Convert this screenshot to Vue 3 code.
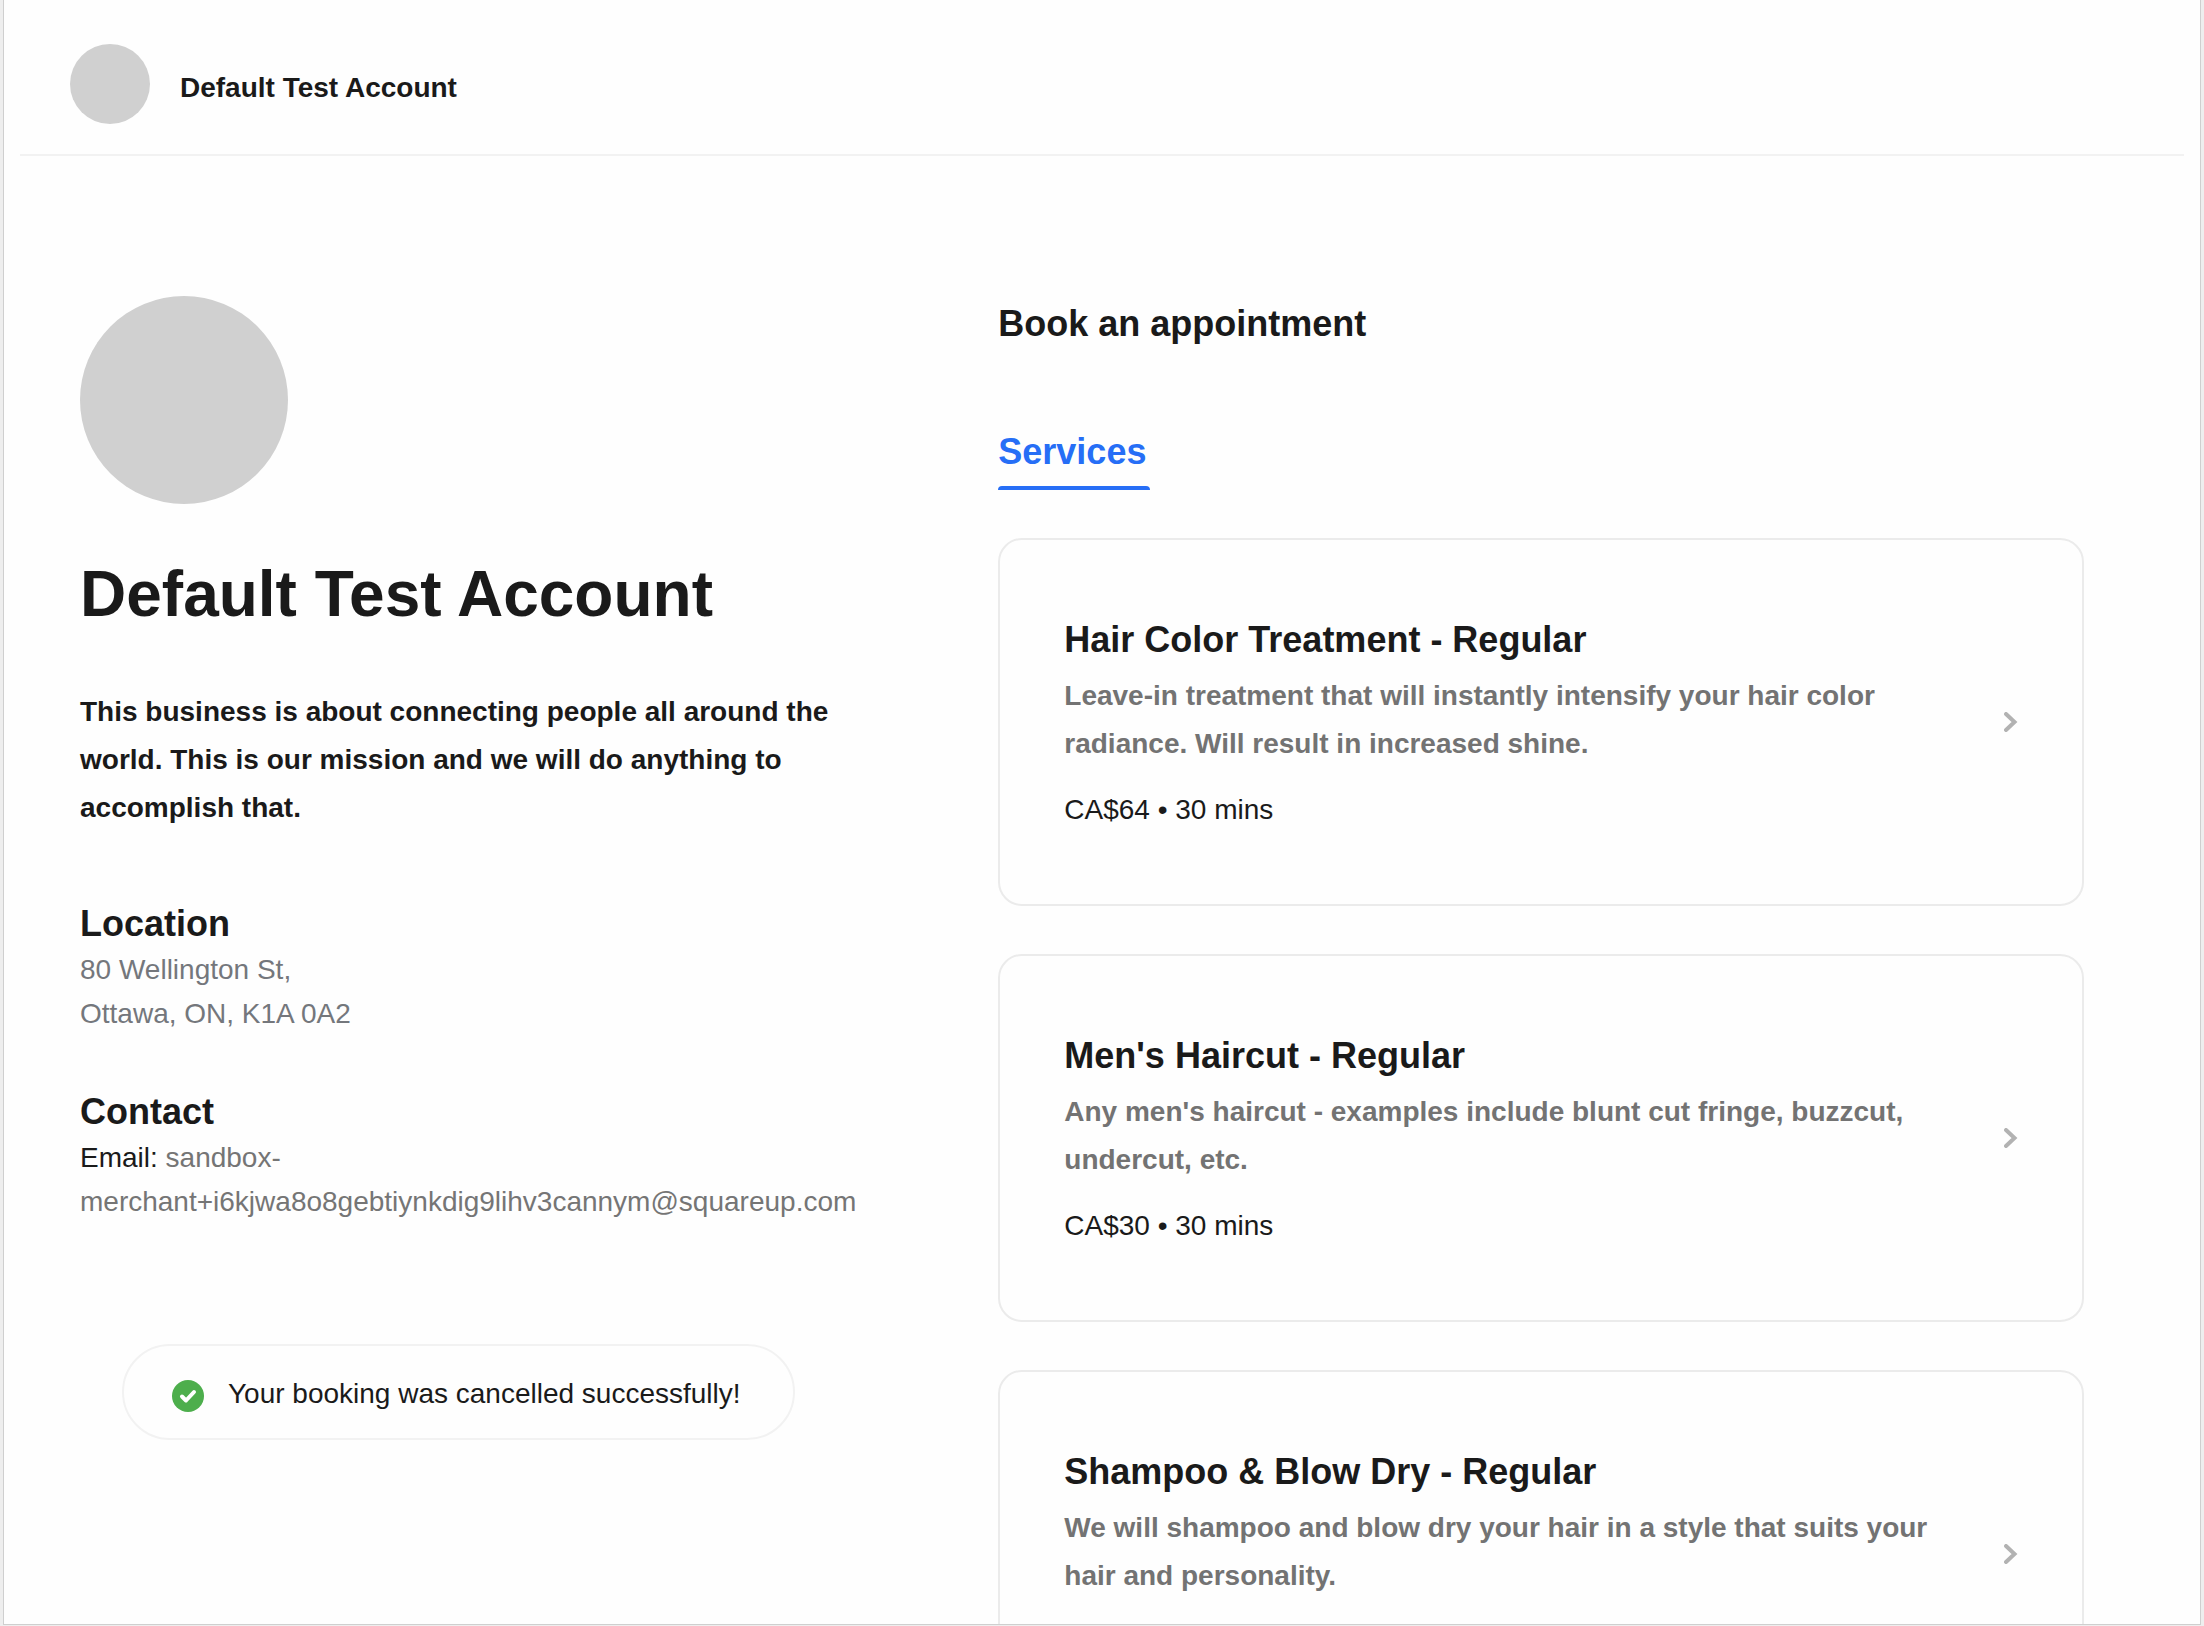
<script setup>
const business = {
  name: 'Default Test Account',
  about:
    'This business is about connecting people all around the world. This is our mission and we will do anything to accomplish that.',
  street: '80 Wellington St,',
  city: 'Ottawa, ON, K1A 0A2',
  email: 'sandbox-merchant+i6kjwa8o8gebtiynkdig9lihv3cannym@squareup.com',
}

const services = [
  {
    id: 'color',
    name: 'Hair Color Treatment - Regular',
    description:
      'Leave-in treatment that will instantly intensify your hair color radiance. Will result in increased shine.',
    price: 'CA$64 • 30 mins',
  },
  {
    id: 'haircut',
    name: "Men's Haircut - Regular",
    description:
      "Any men's haircut - examples include blunt cut fringe, buzzcut, undercut, etc.",
    price: 'CA$30 • 30 mins',
  },
  {
    id: 'shampoo',
    name: 'Shampoo & Blow Dry - Regular',
    description:
      'We will shampoo and blow dry your hair in a style that suits your hair and personality.',
    price: '',
  },
]
</script>

<template>
  <div class="backdrop">
    <div class="window">
      <header class="topbar">
        <span class="avatar avatar-small"></span>
        <span class="brand">{{ business.name }}</span>
      </header>

      <main class="columns">
        <aside class="profile">
          <span class="avatar avatar-large"></span>
          <h1>{{ business.name }}</h1>
          <p class="about">{{ business.about }}</p>

          <section class="info">
            <h2>Location</h2>
            <address>{{ business.street }}<br />{{ business.city }}</address>
          </section>

          <section class="info">
            <h2>Contact</h2>
            <p class="contact">
              Email: <a :href="'mailto:' + business.email">{{ business.email }}</a>
            </p>
          </section>

          <div class="toast" role="status">
            <svg class="check" viewBox="0 0 32 32" aria-hidden="true">
              <circle cx="16" cy="16" r="16" fill="#4dae4c" />
              <path
                d="M10 16.5 L14 20.5 L22 12"
                fill="none"
                stroke="#fff"
                stroke-width="4"
                stroke-linecap="round"
                stroke-linejoin="round"
              />
            </svg>
            <span>Your booking was cancelled successfully!</span>
          </div>
        </aside>

        <section class="booking">
          <h2>Book an appointment</h2>
          <nav class="tabs">
            <button type="button" class="tab">Services</button>
          </nav>
          <ul class="services">
            <li v-for="service in services" :key="service.id">
              <a class="card" :href="'#' + service.id">
                <div class="card-text">
                  <h3>{{ service.name }}</h3>
                  <p class="description">{{ service.description }}</p>
                  <p class="price">{{ service.price }}</p>
                </div>
                <svg class="chevron" viewBox="0 0 14 20" aria-hidden="true">
                  <path
                    d="M2 2 L10.5 10 L2 18"
                    fill="none"
                    stroke="#b2b2b2"
                    stroke-width="4"
                    stroke-linecap="round"
                    stroke-linejoin="miter"
                  />
                </svg>
              </a>
            </li>
          </ul>
        </section>
      </main>
    </div>
  </div>
</template>

<style>
body {
  margin: 0;
}
</style>

<style scoped>
.backdrop {
  box-sizing: border-box;
  height: 100vh;
  padding: 0 3px 1px;
  background: #eeeeee;
  color: #1a1a1a;
  font-family: "Liberation Sans", Arial, sans-serif;
  font-size: 28px;
  line-height: 44px;
}

.window {
  box-sizing: border-box;
  height: 100%;
  overflow: hidden;
  border: 1px solid #cfcfcf;
  border-top: 0;
  background: #fefefe;
}

h1,
h2,
h3,
p,
ul {
  margin: 0;
  padding: 0;
}

h2,
h3 {
  font-size: 36px;
  line-height: 48px;
}

a {
  color: inherit;
  text-decoration: none;
}

.avatar {
  display: block;
  flex: none;
  border-radius: 50%;
  background: #d0d0d0;
}

.avatar-small {
  width: 80px;
  height: 80px;
}

.avatar-large {
  width: 208px;
  height: 208px;
}

.topbar {
  display: flex;
  align-items: center;
  gap: 30px;
  margin: 0 16px;
  padding: 44px 50px 30px;
  border-bottom: 2px solid #f2f2f2;
}

.brand {
  padding-top: 8px;
  font-weight: 700;
}

.columns {
  display: grid;
  grid-template-columns: 25fr 34fr;
  gap: 120px;
  align-items: start;
  padding: 140px 116px 0 76px;
}

h1 {
  margin-top: 50px;
  font-size: 64px;
  line-height: 80px;
}

.about {
  margin-top: 54px;
  font-weight: 700;
  line-height: 48px;
}

.info {
  margin-top: 52px;
}

.about + .info {
  margin-top: 68px;
}

address {
  color: #74777c;
  font-style: normal;
}

.contact a {
  color: #757575;
}

.toast {
  display: flex;
  align-items: center;
  gap: 24px;
  box-sizing: border-box;
  width: fit-content;
  margin: 120px 0 0 42px;
  padding: 26px 52px 22px 48px;
  border: 2px solid #f2f2f2;
  border-radius: 48px;
}

.check {
  width: 32px;
  height: 32px;
  margin-top: 4px;
}

.booking {
  padding-top: 4px;
}

.tabs {
  display: flex;
  margin: 80px 0 48px;
}

.tab {
  padding: 0;
  border: 0;
  background: none;
  color: #266ef6;
  font: inherit;
  font-size: 36px;
  font-weight: 700;
  line-height: 48px;
  padding-right: 4px;
  text-align: left;
}

.tab::after {
  content: "";
  display: block;
  height: 4px;
  margin: 10px -4px 0 0;
  border-radius: 4px 4px 0 0;
  background: #266ef6;
}

.services {
  display: grid;
  gap: 48px;
  list-style: none;
}

.card {
  display: flex;
  align-items: center;
  justify-content: space-between;
  gap: 48px;
  padding: 72px 64px;
  border: 2px solid #ebebeb;
  border-radius: 24px;
}

.card-text {
  padding-top: 4px;
}

.description {
  margin: 8px 0 20px;
  color: #737373;
  font-weight: 700;
  line-height: 48px;
}

.price {
  min-height: 44px;
}

.chevron {
  flex: none;
  width: 14px;
  height: 20px;
}
</style>
